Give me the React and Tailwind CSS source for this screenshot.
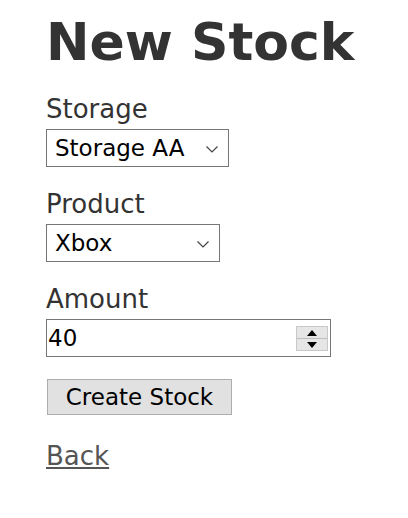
const Chevron = () => (
  <svg width="12" height="7" viewBox="0 0 12 7" className="absolute right-[10px] top-[16px]">
    <path d="M0.5 0.5 L6 6 L11.5 0.5" fill="none" stroke="#444" strokeWidth="1.2" />
  </svg>
);

const Field = ({ label, children }) => (
  <div className="mb-[22px]">
    <label className="block text-[26px] leading-[30px] text-[#333] mb-[5px]">{label}</label>
    {children}
  </div>
);

const App = () => {
  return (
    <div className="min-h-[518px] bg-white pl-[46px] pt-[10px]" style={{ fontFamily: '"DejaVu Sans", Verdana, sans-serif' }}>
      <h1 className="text-[52px] leading-[64px] font-bold text-[#333] mb-[20px]">New Stock</h1>

      <Field label="Storage">
        <div className="relative w-[183px] h-[38px] border border-[#767676] bg-white">
          <div className="pl-[8px] text-[23px] leading-[36px] text-black">Storage AA</div>
          <Chevron />
        </div>
      </Field>

      <Field label="Product">
        <div className="relative w-[174px] h-[38px] border border-[#767676] bg-white">
          <div className="pl-[8px] text-[23px] leading-[36px] text-black">Xbox</div>
          <Chevron />
        </div>
      </Field>

      <Field label="Amount">
        <div className="relative w-[285px] h-[38px] border border-[#767676] bg-white">
          <div className="pl-[1px] text-[23px] leading-[36px] text-black">40</div>
          <div className="absolute right-[2px] top-[6px] w-[32px] h-[25px] flex flex-col border border-[#c8c8c8] bg-[#e6e6e6]">
            <div className="flex-1 flex items-center justify-center border-b border-[#bdbdbd]">
              <svg width="10" height="6" viewBox="0 0 10 6"><path d="M5 0 L10 6 L0 6 Z" fill="#000" /></svg>
            </div>
            <div className="flex-1 flex items-center justify-center">
              <svg width="10" height="6" viewBox="0 0 10 6"><path d="M0 0 L10 0 L5 6 Z" fill="#000" /></svg>
            </div>
          </div>
        </div>
      </Field>

      <button className="block ml-[1px] w-[185px] h-[36px] border border-[#adadad] bg-[#e1e1e1] text-[23px] leading-[34px] text-black">
        Create Stock
      </button>

      <a href="#" className="inline-block mt-[26px] text-[26px] leading-[30px] text-[#555] underline">
        Back
      </a>
    </div>
  );
};

export default App;
